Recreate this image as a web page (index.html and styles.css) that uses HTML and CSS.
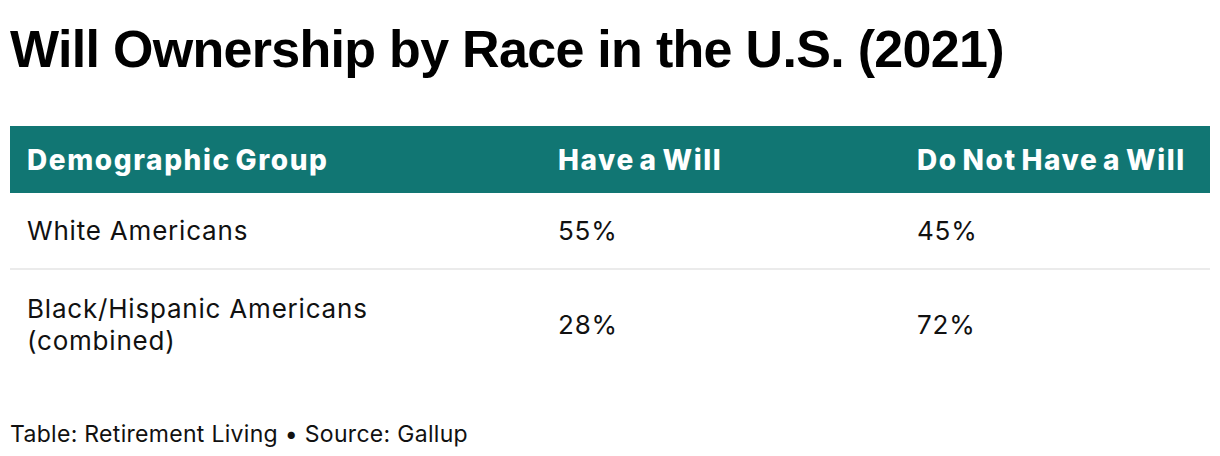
FILE: index.html
```html
<!DOCTYPE html>
<html>
<head>
<meta charset="utf-8">
<link rel="stylesheet" href="styles.css">
</head>
<body>
<div class="page">
  <h1 class="title">Will Ownership by Race in the U.S. (2021)</h1>
  <div class="table">
    <div class="row head">
      <div class="cell">Demographic Group</div>
      <div class="cell">Have a Will</div>
      <div class="cell">Do Not Have a Will</div>
    </div>
    <div class="row body sep">
      <div class="cell">White Americans</div>
      <div class="cell">55%</div>
      <div class="cell">45%</div>
    </div>
    <div class="row body">
      <div class="cell">Black/Hispanic Americans<br>(combined)</div>
      <div class="cell">28%</div>
      <div class="cell">72%</div>
    </div>
  </div>
  <p class="footer">Table: Retirement Living • Source: Gallup</p>
</div>
</body>
</html>
```

FILE: styles.css
```css
html, body {
  margin: 0;
  padding: 0;
  background: #ffffff;
}
.page {
  padding: 0 10px;
  width: 1200px;
}
.title {
  margin: 0;
  padding-top: 18px;
  height: 126px;
  box-sizing: border-box;
  font-family: "Liberation Sans", Arial, sans-serif;
  font-weight: 700;
  font-size: 52px;
  line-height: 62px;
  letter-spacing: -0.7px;
  color: #000;
}
.table {
  display: flex;
  flex-direction: column;
}
.row {
  display: grid;
  grid-template-columns: 531px 359px 310px;
  align-items: center;
}
.cell {
  padding-left: 17px;
}
.head {
  background: #117673;
  height: 67px;
  color: #fff;
  font-family: Inter, Roboto, sans-serif;
  font-weight: 800;
  font-size: 28px;
  letter-spacing: 1.6px;
  word-spacing: -3px;
}
.body {
  font-family: Inter, Roboto, sans-serif;
  font-size: 26px;
  line-height: 32px;
  letter-spacing: 0.8px;
  color: #111;
}
.row.body.sep {
  height: 75px;
  border-bottom: 2px solid #ebebeb;
}
.row.body:last-child {
  height: 110px;
}
.footer {
  margin: 0;
  padding-top: 40px;
  font-family: Inter, Roboto, sans-serif;
  font-size: 23px;
  letter-spacing: 0.3px;
  color: #111;
}
```
